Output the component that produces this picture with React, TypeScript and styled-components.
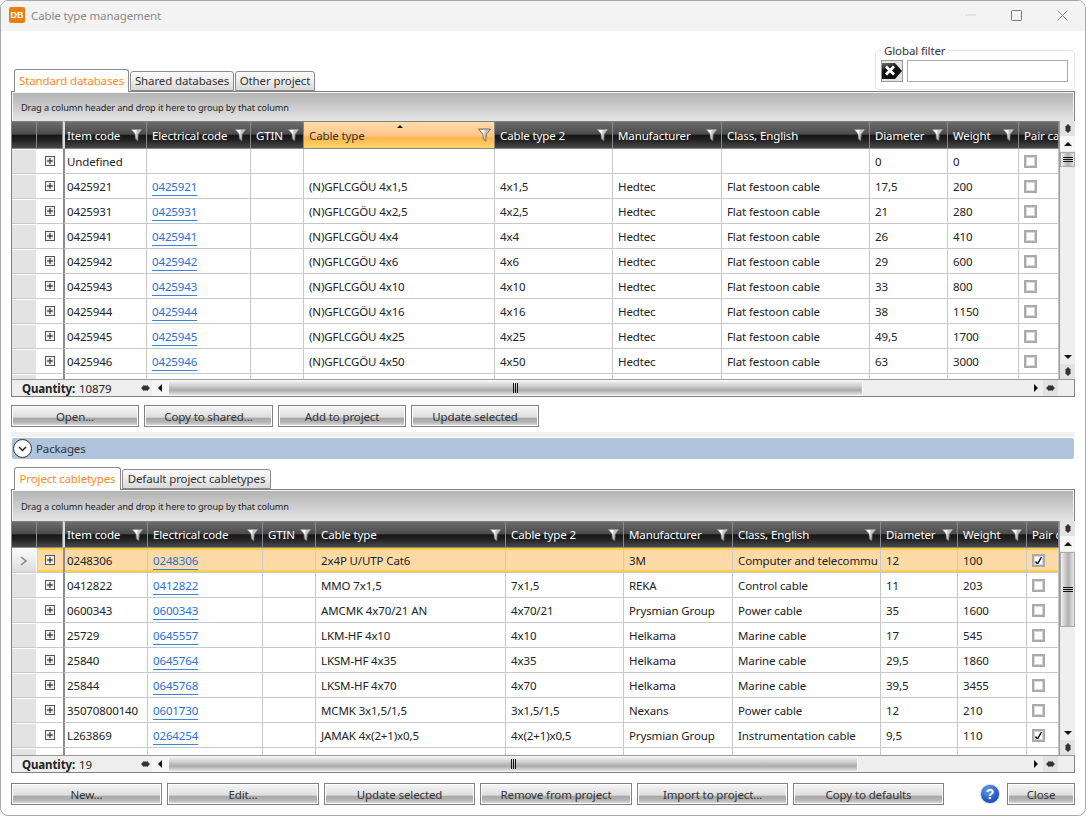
import React from "react";
import styled, { createGlobalStyle } from "styled-components";

const GlobalStyle = createGlobalStyle`
  html, body {
    margin: 0;
    padding: 0;
    background: #fff;
  }
  body {
    font-family: "Noto Sans", "Liberation Sans", sans-serif;
    font-size: 11.5px;
    letter-spacing: -0.12px;
    color: #222;
  }
`;

const Window = styled.div`
  box-sizing: border-box;
  width: 1086px;
  height: 816px;
  border: 1px solid #a8a8a8;
  border-radius: 8px;
  overflow: hidden;
  background: #fff;
  display: flex;
  flex-direction: column;
`;

const TitleBar = styled.div`
  box-sizing: border-box;
  height: 30px;
  flex: none;
  background: #f3f3f3;
  display: flex;
  align-items: center;
  padding: 0 0 2px 8px;
`;

const AppLogo = styled.div`
  width: 16px;
  height: 16px;
  margin-right: 6px;
  border-radius: 2px;
  background: #ee7d11;
  color: #fff;
  font: bold 9px "Liberation Sans", sans-serif;
  letter-spacing: 0;
  display: flex;
  align-items: center;
  justify-content: center;
`;

const TitleText = styled.span`
  color: #8a8a8a;
  font-size: 11.5px;
  flex: 1;
`;

const WinButton = styled.div`
  width: 46px;
  height: 28px;
  display: flex;
  align-items: center;
  justify-content: center;
`;

const Content = styled.div`
  flex: 1;
  padding: 0 10px;
  display: flex;
  flex-direction: column;
`;

const TopArea = styled.div`
  height: 60px;
  flex: none;
  display: flex;
  justify-content: space-between;
  align-items: flex-end;
`;

const FilterBox = styled.fieldset`
  box-sizing: border-box;
  width: 199px;
  height: 46px;
  margin: 0 0 1px 0;
  padding: 3px 6px 0 5px;
  border: 1px solid #dfe3e8;
  border-radius: 4px;
  display: flex;
  gap: 4px;
  legend {
    padding: 1px 3px 0;
    margin-left: 0;
    font-size: 11.5px;
    line-height: 12px;
    color: #333;
  }
`;

const ClearButton = styled.div`
  box-sizing: border-box;
  width: 22px;
  height: 22px;
  border: 1px solid #999;
  background: #e4e4e4;
  display: flex;
  align-items: center;
  justify-content: center;
`;

const FilterInput = styled.input`
  box-sizing: border-box;
  width: 161px;
  height: 22px;
  border: 1px solid #aaa;
  padding: 0;
  background: #fff;
`;

const TabStrip = styled.div<{ $top?: number }>`
  height: 21px;
  flex: none;
  display: flex;
  align-items: flex-end;
  padding-left: 3px;
  margin-top: ${(p) => p.$top ?? 0}px;
  position: relative;
  z-index: 1;
`;

const Tab = styled.div<{ $active?: boolean; $w: number }>`
  box-sizing: border-box;
  width: ${(p) => p.$w}px;
  height: ${(p) => (p.$active ? 23 : 20)}px;
  margin-bottom: ${(p) => (p.$active ? -1 : 0)}px;
  margin-right: 1px;
  border: 1px solid #8c8c8c;
  border-bottom: ${(p) => (p.$active ? "none" : "1px solid #8c8c8c")};
  border-radius: 3px 3px 0 0;
  background: ${(p) =>
    p.$active ? "#fff" : "linear-gradient(#fafafa, #f0f0f0 40%, #d8d8d8)"};
  color: ${(p) => (p.$active ? "#ff8a1c" : "#333")};
  text-align: center;
  line-height: ${(p) => (p.$active ? 21 : 18)}px;
  white-space: nowrap;
`;

const GridFrame = styled.div`
  box-sizing: border-box;
  flex: none;
  border: 1px solid #808080;
  display: flex;
  flex-direction: column;
  background: #eee;
`;

const GroupPanel = styled.div<{ $h: number }>`
  box-sizing: border-box;
  height: ${(p) => p.$h}px;
  flex: none;
  border: 1px solid #f4f4f4;
  border-bottom: none;
  background: linear-gradient(#b4b4b4, #e4e4e4);
  display: flex;
  align-items: center;
  padding-left: 8px;
  font-size: 9.2px;
  color: #222;
`;

const GridMiddle = styled.div`
  display: flex;
  flex: none;
`;

const TableArea = styled.div`
  width: 1047px;
  flex: none;
  border-right: 1px solid #999;
  box-sizing: content-box;
  background: #fff;
`;

const HeaderRow = styled.div<{ $cols: string; $h: number }>`
  display: grid;
  grid-template-columns: ${(p) => p.$cols};
  height: ${(p) => p.$h}px;
`;

const HeaderCell = styled.div<{ $sorted?: boolean }>`
  box-sizing: border-box;
  position: relative;
  overflow: hidden;
  display: flex;
  align-items: center;
  padding-left: 5px;
  white-space: nowrap;
  border-top: 1px solid #808080;
  border-right: 1px solid #8a8a8a;
  border-bottom: 1px solid #8a8a8a;
  color: ${(p) => (p.$sorted ? "#333" : "#fff")};
  background: ${(p) =>
    p.$sorted
      ? "linear-gradient(#ffdcab, #ffc78a 50%, #ffb54e 62%, #ffd76c)"
      : "linear-gradient(#6c6c6c, #4c4c4c 46%, #161616 52%, #232323 70%, #484848)"};
`;

const ItemHeaderCell = styled(HeaderCell)`
  padding-left: 2px;
  border-left: 2px solid #ddd;
`;

const FilterIcon = styled.svg`
  position: absolute;
  right: 3px;
  top: 6px;
`;

const SortArrow = styled.div`
  position: absolute;
  top: 3px;
  left: 93px;
  width: 0;
  height: 0;
  border-left: 3px solid transparent;
  border-right: 3px solid transparent;
  border-bottom: 3px solid #111;
`;

const Body = styled.div<{ $h: number }>`
  height: ${(p) => p.$h}px;
  overflow: hidden;
`;

const Row = styled.div<{ $cols: string }>`
  display: grid;
  grid-template-columns: ${(p) => p.$cols};
  height: 25px;
`;

const Cell = styled.div<{ $selected?: boolean }>`
  box-sizing: border-box;
  overflow: hidden;
  white-space: nowrap;
  display: flex;
  align-items: center;
  padding-left: 5px;
  border-right: 1px solid #c8c8c8;
  border-bottom: 1px solid #c8c8c8;
  color: #222;
  ${(p) =>
    p.$selected &&
    `background: linear-gradient(#fdd8a2, #fcdcaa);
     box-shadow: inset 0 2px 0 #fbd044, inset 0 -2px 0 #fbd044;`}
`;

const ItemCell = styled(Cell)`
  padding-left: 2px;
  border-left: 2px solid #8c8c8c;
`;

const SelectorCell = styled.div<{ $selected?: boolean }>`
  box-sizing: border-box;
  border-top: 1px solid #fff;
  border-right: 1px solid #fff;
  border-bottom: 1px solid #c8c8c8;
  background: ${(p) => (p.$selected ? "linear-gradient(#fafafa, #dcdcdc)" : "#e3e3e3")};
  display: flex;
  align-items: center;
  justify-content: center;
`;

const ExpandCell = styled.div<{ $selected?: boolean }>`
  box-sizing: border-box;
  border-bottom: 1px solid #c8c8c8;
  display: flex;
  align-items: center;
  justify-content: center;
  ${(p) =>
    p.$selected &&
    `background: linear-gradient(#fdd8a2, #fcdcaa);
     box-shadow: inset 1px 0 0 #fbd044, inset 0 2px 0 #fbd044, inset 0 -2px 0 #fbd044;`}
`;

const CodeLink = styled.span`
  color: #2a6fd2;
  text-decoration: underline;
  text-decoration-color: #3a85dc;
  text-underline-offset: 4px;
`;

const CheckBox = styled.div`
  box-sizing: border-box;
  width: 13px;
  height: 13px;
  border: 2px solid #aaa;
  outline: 1px solid #d8d8d8;
  outline-offset: -3px;
  background: #fff;
  display: flex;
  align-items: center;
  justify-content: center;
`;

const VScroll = styled.div`
  width: 15px;
  flex: none;
  display: flex;
  flex-direction: column;
  background: #eee;
`;

const ScrollCap = styled.div<{ $bg: string }>`
  height: 15px;
  flex: none;
  background: ${(p) => p.$bg};
  display: flex;
  align-items: center;
  justify-content: center;
`;

const VTrack = styled.div`
  flex: 1;
  overflow: hidden;
`;

const VThumb = styled.div<{ $top: number; $h: number }>`
  box-sizing: border-box;
  margin-top: ${(p) => p.$top}px;
  height: ${(p) => p.$h}px;
  border: 1px solid #f8f8f8;
  outline: 1px solid #aaa;
  outline-offset: -1px;
  background: linear-gradient(90deg, #f2f2f2, #b0b0b0 55%, #e8e8e8);
  display: flex;
  align-items: center;
  justify-content: center;
`;

const Footer = styled.div`
  box-sizing: border-box;
  height: 17px;
  flex: none;
  display: flex;
  align-items: stretch;
  background: #eee;
  border-top: 1px solid #999;
`;

const Quantity = styled.div`
  width: 127px;
  flex: none;
  box-sizing: border-box;
  padding-left: 10px;
  display: flex;
  align-items: center;
  gap: 4px;
  color: #222;
  b {
    font-weight: 700;
  }
`;

const NavCell = styled.div<{ $w: number; $bg?: string }>`
  width: ${(p) => p.$w}px;
  flex: none;
  background: ${(p) => p.$bg ?? "transparent"};
  display: flex;
  align-items: center;
  justify-content: center;
`;

const HTrack = styled.div`
  flex: 1;
  overflow: hidden;
`;

const HThumb = styled.div<{ $w: number }>`
  box-sizing: border-box;
  width: ${(p) => p.$w}px;
  height: 100%;
  border: 1px solid #f6f6f6;
  border-right: 1px solid #fff;
  background: linear-gradient(#f2f2f2, #c4c4c4 45%, #aaa 65%, #e4e4e4);
  display: flex;
  align-items: center;
  justify-content: center;
`;

const ButtonRow = styled.div<{ $top: number }>`
  display: flex;
  gap: 5px;
  align-items: center;
  flex: none;
  margin-top: ${(p) => p.$top}px;
`;

const ActionButton = styled.div<{ $w: number }>`
  box-sizing: border-box;
  width: ${(p) => p.$w}px;
  height: 22px;
  flex: none;
  border: 1px solid #808080;
  box-shadow: inset 0 0 0 1px #fff;
  background: linear-gradient(#f6f6f6, #dedede 55%, #a9a9a9 62%, #b4b4b4 80%, #e4e4e4);
  color: #333;
  text-align: center;
  line-height: 22px;
  white-space: nowrap;
`;

const Spacer = styled.div<{ $w: number }>`
  width: ${(p) => p.$w}px;
  flex: none;
`;

const HelpIcon = styled.div`
  box-sizing: border-box;
  width: 20px;
  height: 20px;
  flex: none;
  margin-right: 2px;
  border-radius: 50%;
  border: 1px solid #c9d6ea;
  background: radial-gradient(circle at 40% 30%, #6a9df0, #1f56c0 65%, #173f96);
  color: #fff;
  font: bold 14px "Liberation Sans", sans-serif;
  letter-spacing: 0;
  display: flex;
  align-items: center;
  justify-content: center;
`;

const Separator = styled.div`
  height: 5px;
  flex: none;
  margin-top: 5px;
  background: #f1f1f1;
`;

const PackagesBar = styled.div`
  height: 21px;
  flex: none;
  margin: 1px 1px 0 1px;
  border-radius: 2px;
  background: #b0c4de;
  display: flex;
  align-items: center;
  gap: 4px;
  padding-left: 1px;
  color: #333;
`;

const ExpanderIcon = styled.div`
  box-sizing: border-box;
  width: 19px;
  height: 19px;
  border-radius: 50%;
  border: 1px solid #333;
  background: #fff;
  display: flex;
  align-items: center;
  justify-content: center;
`;

const Funnel = () => (
  <FilterIcon width="13" height="14" viewBox="0 0 13 14">
    <path d="M.5 1h12L8.3 6.5 7.8 13 5.4 11 5 6.5z" fill="#c4c4c4" stroke="#5a5a5a" strokeWidth=".8" />
    <path d="M2.5 2h4L6 11 5.6 6z" fill="#fff" />
  </FilterIcon>
);

const PlusBox = () => (
  <svg width="10" height="10" viewBox="0 0 10 10">
    <rect x=".5" y=".5" width="9" height="9" fill="#f0f0f0" stroke="#555" />
    <path d="M2 5h6M5 2v6" stroke="#111" />
  </svg>
);

const Tick = () => (
  <svg width="9" height="9" viewBox="0 0 9 9">
    <path d="M1.5 5.5 3.5 8 7.5 1" fill="none" stroke="#111" strokeWidth="1.5" />
  </svg>
);

const Nav = () => (
  <svg width="9" height="8" viewBox="0 0 9 8">
    <path d="M0 4 3 1v6zM9 4 6 1v6z" fill="#333" />
    <rect x="2.5" y="1.5" width="4" height="5" fill="#333" />
  </svg>
);

const VNav = () => (
  <svg width="8" height="9" viewBox="0 0 8 9">
    <path d="M4 0 7 3H1zM4 9 7 6H1z" fill="#333" />
    <rect x="1.5" y="2.5" width="5" height="4" fill="#333" />
  </svg>
);

const Arrow = ({ dir }: { dir: "up" | "down" | "left" | "right" }) => {
  const paths = {
    up: "M0 5 4 1l4 4z",
    down: "M0 1l4 4 4-4z",
    left: "M5 0 1 4l4 4z",
    right: "M1 0l4 4-4 4z"
  };
  const horizontal = dir === "left" || dir === "right";
  return (
    <svg width={horizontal ? 6 : 8} height={horizontal ? 8 : 6} viewBox={horizontal ? "0 0 6 8" : "0 0 8 6"}>
      <path d={paths[dir]} fill="#111" />
    </svg>
  );
};

type RowData = {
  item: string;
  code?: string;
  cable?: string;
  type2?: string;
  maker?: string;
  cls?: string;
  dia: string;
  weight: string;
  pair?: boolean;
  selected?: boolean;
};

const festoon = (item: string, size: string, dia: string, weight: string): RowData => ({
  item,
  code: item,
  cable: `(N)GFLCGÖU ${size}`,
  type2: size,
  maker: "Hedtec",
  cls: "Flat festoon cable",
  dia,
  weight
});

const standardRows: RowData[] = [
  { item: "Undefined", dia: "0", weight: "0" },
  festoon("0425921", "4x1,5", "17,5", "200"),
  festoon("0425931", "4x2,5", "21", "280"),
  festoon("0425941", "4x4", "26", "410"),
  festoon("0425942", "4x6", "29", "600"),
  festoon("0425943", "4x10", "33", "800"),
  festoon("0425944", "4x16", "38", "1150"),
  festoon("0425945", "4x25", "49,5", "1700"),
  festoon("0425946", "4x50", "63", "3000")
];

const projectRows: RowData[] = [
  { item: "0248306", code: "0248306", cable: "2x4P U/UTP Cat6", maker: "3M", cls: "Computer and telecommu", dia: "12", weight: "100", pair: true, selected: true },
  { item: "0412822", code: "0412822", cable: "MMO 7x1,5", type2: "7x1,5", maker: "REKA", cls: "Control cable", dia: "11", weight: "203" },
  { item: "0600343", code: "0600343", cable: "AMCMK 4x70/21 AN", type2: "4x70/21", maker: "Prysmian Group", cls: "Power cable", dia: "35", weight: "1600" },
  { item: "25729", code: "0645557", cable: "LKM-HF 4x10", type2: "4x10", maker: "Helkama", cls: "Marine cable", dia: "17", weight: "545" },
  { item: "25840", code: "0645764", cable: "LKSM-HF 4x35", type2: "4x35", maker: "Helkama", cls: "Marine cable", dia: "29,5", weight: "1860" },
  { item: "25844", code: "0645768", cable: "LKSM-HF 4x70", type2: "4x70", maker: "Helkama", cls: "Marine cable", dia: "39,5", weight: "3455" },
  { item: "35070800140", code: "0601730", cable: "MCMK 3x1,5/1,5", type2: "3x1,5/1,5", maker: "Nexans", cls: "Power cable", dia: "12", weight: "210" },
  { item: "L263869", code: "0264254", cable: "JAMAK 4x(2+1)x0,5", type2: "4x(2+1)x0,5", maker: "Prysmian Group", cls: "Instrumentation cable", dia: "9,5", weight: "110", pair: true }
];

const headers = ["Electrical code", "GTIN", "Cable type", "Cable type 2", "Manufacturer", "Class, English", "Diameter", "Weight"];

type DataGridProps = {
  cols: string;
  rows: RowData[];
  groupH: number;
  headH: number;
  bodyH: number;
  quantity: string;
  thumbTop: number;
  thumbH: number;
  hThumb: number;
  sorted?: boolean;
};

const DataGrid: React.FC<DataGridProps> = ({ cols, rows, groupH, headH, bodyH, quantity, thumbTop, thumbH, hThumb, sorted }) => (
  <GridFrame>
    <GroupPanel $h={groupH}>Drag a column header and drop it here to group by that column</GroupPanel>
    <GridMiddle>
      <TableArea>
        <HeaderRow $cols={cols} $h={headH}>
          <HeaderCell />
          <HeaderCell />
          <ItemHeaderCell>
            Item code
            <Funnel />
          </ItemHeaderCell>
          {headers.map((h) => (
            <HeaderCell key={h} $sorted={sorted && h === "Cable type"}>
              {h}
              {sorted && h === "Cable type" && <SortArrow />}
              <Funnel />
            </HeaderCell>
          ))}
          <HeaderCell>Pair cable</HeaderCell>
        </HeaderRow>
        <Body $h={bodyH}>
          {rows.map((r) => (
            <Row key={r.item} $cols={cols}>
              <SelectorCell $selected={r.selected}>
                {r.selected && (
                  <svg width="8" height="10" viewBox="0 0 8 10">
                    <path d="M1 1l5 4-5 4" fill="none" stroke="#8a8a8a" strokeWidth="1.6" />
                  </svg>
                )}
              </SelectorCell>
              <ExpandCell $selected={r.selected}>
                <PlusBox />
              </ExpandCell>
              <ItemCell $selected={r.selected}>{r.item}</ItemCell>
              <Cell $selected={r.selected}>{r.code && <CodeLink>{r.code}</CodeLink>}</Cell>
              <Cell $selected={r.selected} />
              <Cell $selected={r.selected}>{r.cable}</Cell>
              <Cell $selected={r.selected}>{r.type2}</Cell>
              <Cell $selected={r.selected}>{r.maker}</Cell>
              <Cell $selected={r.selected}>{r.cls}</Cell>
              <Cell $selected={r.selected}>{r.dia}</Cell>
              <Cell $selected={r.selected}>{r.weight}</Cell>
              <Cell $selected={r.selected}>
                <CheckBox>{r.pair && <Tick />}</CheckBox>
              </Cell>
            </Row>
          ))}
          <Row $cols={cols}>
            <SelectorCell />
            <ExpandCell />
            <ItemCell />
            <Cell />
            <Cell />
            <Cell />
            <Cell />
            <Cell />
            <Cell />
            <Cell />
            <Cell />
            <Cell />
          </Row>
        </Body>
      </TableArea>
      <VScroll>
        <ScrollCap $bg="#e2e2e2">
          <VNav />
        </ScrollCap>
        <ScrollCap $bg="#f6f6f6">
          <Arrow dir="up" />
        </ScrollCap>
        <VTrack>
          <VThumb $top={thumbTop} $h={thumbH}>
            <svg width="10" height="5" viewBox="0 0 10 5">
              <path d="M0 .5h10M0 2.5h10M0 4.5h10" stroke="#111" />
            </svg>
          </VThumb>
        </VTrack>
        <ScrollCap $bg="#eee">
          <Arrow dir="down" />
        </ScrollCap>
        <ScrollCap $bg="#e2e2e2">
          <VNav />
        </ScrollCap>
      </VScroll>
    </GridMiddle>
    <Footer>
      <Quantity>
        <b>Quantity:</b> {quantity}
      </Quantity>
      <NavCell $w={13}>
        <Nav />
      </NavCell>
      <NavCell $w={16} $bg="#f6f6f6">
        <Arrow dir="left" />
      </NavCell>
      <HTrack>
        <HThumb $w={hThumb}>
          <svg width="5" height="10" viewBox="0 0 5 10">
            <path d="M.5 0v10M2.5 0v10M4.5 0v10" stroke="#111" />
          </svg>
        </HThumb>
      </HTrack>
      <NavCell $w={15}>
        <Arrow dir="right" />
      </NavCell>
      <NavCell $w={15} $bg="#e2e2e2">
        <Nav />
      </NavCell>
      <NavCell $w={16} />
    </Footer>
  </GridFrame>
);

export default function App() {
  return (
    <Window>
      <GlobalStyle />
      <TitleBar>
        <AppLogo>DB</AppLogo>
        <TitleText>Cable type management</TitleText>
        <WinButton>
          <svg width="11" height="2" viewBox="0 0 11 2">
            <path d="M0 1h11" stroke="#d4d4d4" />
          </svg>
        </WinButton>
        <WinButton>
          <svg width="11" height="11" viewBox="0 0 11 11">
            <rect x=".5" y=".5" width="10" height="10" rx="1" fill="none" stroke="#777" />
          </svg>
        </WinButton>
        <WinButton>
          <svg width="11" height="11" viewBox="0 0 11 11">
            <path d="M.5.5l10 10M10.5.5l-10 10" stroke="#888" />
          </svg>
        </WinButton>
      </TitleBar>
      <Content>
        <TopArea>
          <TabStrip>
            <Tab $active $w={115}>Standard databases</Tab>
            <Tab $w={104}>Shared databases</Tab>
            <Tab $w={80}>Other project</Tab>
          </TabStrip>
          <FilterBox>
            <legend>Global filter</legend>
            <ClearButton>
              <svg width="20" height="18" viewBox="0 0 20 18">
                <defs>
                  <linearGradient id="clearTag" x1="0" y1="0" x2="0.4" y2="1">
                    <stop offset="0" stopColor="#777" />
                    <stop offset="0.45" stopColor="#111" />
                  </linearGradient>
                </defs>
                <path d="M0 1h13l7 8-7 8H0z" fill="url(#clearTag)" />
                <path d="M4 4.5l8 8M12 4.5l-8 8" stroke="#fff" strokeWidth="2.8" />
              </svg>
            </ClearButton>
            <FilterInput />
          </FilterBox>
        </TopArea>
        <DataGrid
          cols="25px 26px 84px 104px 53px 191px 118px 109px 148px 78px 71px 40px"
          rows={standardRows}
          groupH={29}
          headH={28}
          bodyH={230}
          quantity="10879"
          thumbTop={1}
          thumbH={15}
          hThumb={695}
          sorted
        />
        <ButtonRow $top={8}>
          <ActionButton $w={128}>Open...</ActionButton>
          <ActionButton $w={129}>Copy to shared...</ActionButton>
          <ActionButton $w={128}>Add to project</ActionButton>
          <ActionButton $w={128}>Update selected</ActionButton>
        </ButtonRow>
        <Separator />
        <PackagesBar>
          <ExpanderIcon>
            <svg width="9" height="6" viewBox="0 0 9 6">
              <path d="M1 1l3.5 3.5L8 1" fill="none" stroke="#222" strokeWidth="1.5" />
            </svg>
          </ExpanderIcon>
          Packages
        </PackagesBar>
        <TabStrip $top={9}>
          <Tab $active $w={107}>Project cabletypes</Tab>
          <Tab $w={149}>Default project cabletypes</Tab>
        </TabStrip>
        <DataGrid
          cols="25px 26px 85px 115px 53px 190px 118px 109px 148px 77px 69px 32px"
          rows={projectRows}
          groupH={31}
          headH={27}
          bodyH={207}
          quantity="19"
          thumbTop={1}
          thumbH={75}
          hThumb={690}
        />
        <ButtonRow $top={10}>
          <ActionButton $w={151}>New...</ActionButton>
          <ActionButton $w={152}>Edit...</ActionButton>
          <ActionButton $w={151}>Update selected</ActionButton>
          <ActionButton $w={152}>Remove from project</ActionButton>
          <ActionButton $w={151}>Import to project...</ActionButton>
          <ActionButton $w={151}>Copy to defaults</ActionButton>
          <Spacer $w={26} />
          <HelpIcon>?</HelpIcon>
          <ActionButton $w={68}>Close</ActionButton>
        </ButtonRow>
      </Content>
    </Window>
  );
}
